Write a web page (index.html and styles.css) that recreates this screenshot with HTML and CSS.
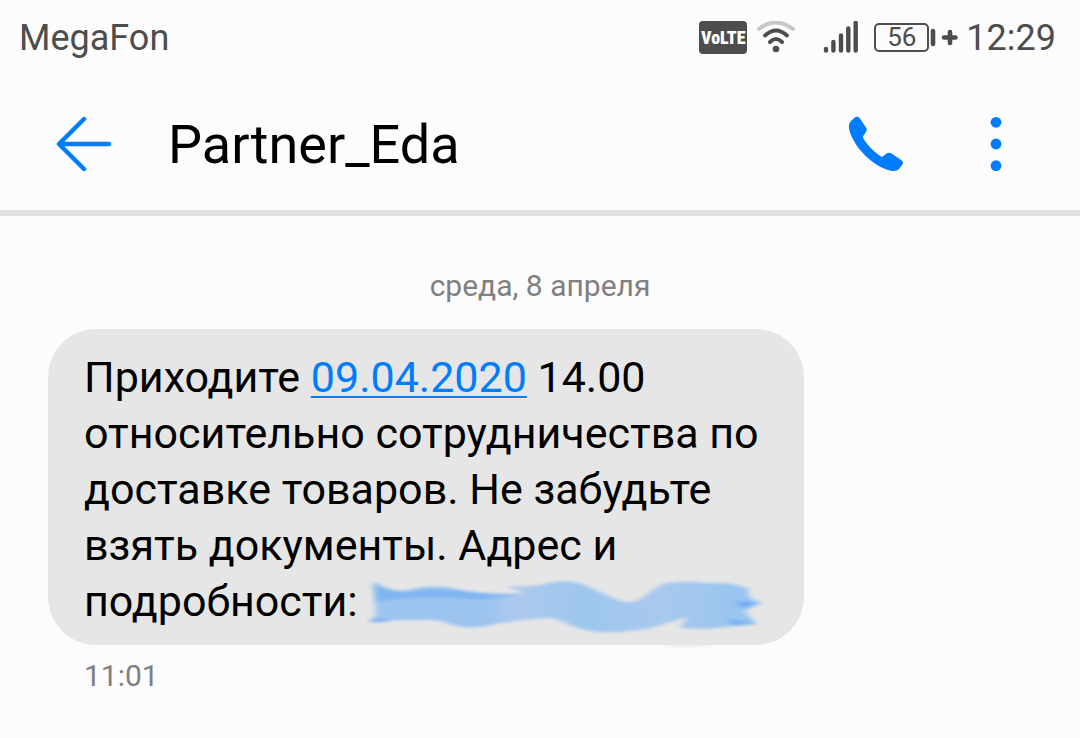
FILE: index.html
```html
<!DOCTYPE html>
<html lang="ru">
  <head>
    <meta charset="utf-8">
    <title>Partner_Eda</title>
    <link rel="stylesheet" href="styles.css">
  </head>
  <body>
    <div class="status-bar">
      <span class="carrier">MegaFon</span>
      <div class="status-icons">
        <span class="volte">VoLTE</span>
        <svg class="wifi" width="38" height="34" viewBox="0 0 38 34" fill="none" stroke="#4d4d4d" stroke-width="4" stroke-linecap="round">
          <path d="M2 8Q19-5 36 8" stroke="#c8c8c8" />
          <path d="M8 14.500Q19 4.500 30 14.500" />
          <path d="M13 21Q19 15 25 21" />
          <circle cx="19" cy="28" r="3.3" fill="#4d4d4d" stroke="none" />
        </svg>
        <svg class="signal" width="36" height="34" viewBox="0 0 36 34" stroke="#4d4d4d" stroke-width="4.4" stroke-linecap="round">
          <path d="M3 28V29.500M10.400 21V29.500M18 14.500V29.500M25.300 7.500V29.500M32.700 1.800V29.500" />
        </svg>
        <div class="battery">
          <span class="battery-level">56</span>
          <svg width="30" height="20" viewBox="0 0 30 20" stroke="#4d4d4d" stroke-width="4.600" stroke-linecap="round">
            <path d="M4 3V16" />
            <path d="M15 9.500H26.500M21 4V15" />
          </svg>
        </div>
        <span class="clock">12:29</span>
      </div>
    </div>

    <header class="header">
      <button class="icon-button" aria-label="Назад">
        <svg width="56" height="56" viewBox="0 0 56 56" fill="none" stroke="#007dff" stroke-width="4.4" stroke-linecap="round" stroke-linejoin="round">
          <path d="M28 3L3 28L28 53M3 28H53" />
        </svg>
      </button>
      <h1 class="title">Partner_Eda</h1>
      <button class="icon-button" aria-label="Позвонить">
        <svg width="56" height="56" viewBox="0 0 56 56" fill="#007dff">
          <path d="M3 5L6.500 1.700Q9.500 -.2 11.500 2L18 11.500Q19.500 13.500 18 15.800L14.700 21C18 28 26.500 36.500 34 41L38.500 37.500Q41 36 43.500 37.500L53.500 44.200Q56 46 54.500 48.300L51 53Q49 55.500 44 55C28 52 10 36 3 19C.5 13 0 8 3 5Z" />
        </svg>
      </button>
      <button class="icon-button" aria-label="Меню">
        <svg width="56" height="56" viewBox="0 0 56 56" fill="#007dff">
          <circle cx="28" cy="6.300" r="5.400" />
          <circle cx="28" cy="28" r="5.400" />
          <circle cx="28" cy="49.700" r="5.400" />
        </svg>
      </button>
    </header>

    <main class="chat">
      <p class="date">среда, 8 апреля</p>
      <div class="message">
        Приходите <a class="message-link" href="#">09.04.2020</a> 14.00 относительно сотрудничества по доставке товаров. Не забудьте взять документы. Адрес и <span class="last-line">подробности:<svg class="smear" width="396" height="56" viewBox="0 0 396 56">
          <defs>
            <linearGradient id="paint" x1="0" y1="0" x2="1" y2="0">
              <stop offset="0" stop-color="#9cc4ee" />
              <stop offset=".3" stop-color="#9cc4ef" />
              <stop offset=".38" stop-color="#adc9ec" />
              <stop offset=".55" stop-color="#9dc7ef" />
              <stop offset=".75" stop-color="#a9c9ee" />
              <stop offset="1" stop-color="#94c3f0" />
            </linearGradient>
            <filter id="soft" x="-10%" y="-30%" width="120%" height="160%">
              <feGaussianBlur stdDeviation="3 1.400" />
            </filter>
          </defs>
          <g filter="url(#soft)">
            <path fill="#e6e6e6" d="M294 71Q318 77 350 71Z" />
            <path fill="url(#paint)" d="M7 10Q12 9 16 13Q26 19 38 18C55 13 75 12 90 16C112 22 135 21 158 20L141 13Q160 14 174 12C198 5 211 8 227 16C247 25 255 30 266 29C283 25 287 12 301 10Q322 7 341 10Q362 9 382 15L383 24L395 30L378 38L391 51Q366 53 341 56L314 55L321 44C300 50 287 57 260 58C235 62 213 57 197 49L187 45C168 45 154 48 134 50C112 56 94 56 78 49C65 45 50 48 34 47L4 49L10 42Z" />
            <path fill="#70adf3" opacity=".65" d="M8 11L18 15Q36 20 51 18C77 13 100 20 152 22Q112 29 88 25Q50 22 10 29Z" />
            <path fill="#5ca3f5" d="M4 46H21V49H4ZM368 28L393 30L376 35ZM362 46L390 51L367 52Z" opacity=".7" />
          </g>
        </svg></span>
      </div>
      <time class="time">11:01</time>
    </main>
  </body>
</html>
```
FILE: styles.css
```css
body {
  margin: 0;
  font-family: Roboto, "Noto Sans", sans-serif;
  background-color: #fcfcfc;
  color: #000;
}

.status-bar {
  display: flex;
  align-items: center;
  justify-content: space-between;
  height: 75px;
  padding: 0 24px 0 19px;
  font-size: 36px;
  color: #4d4d4d;
}

.status-icons {
  display: flex;
  align-items: center;
}

.volte {
  width: 48px;
  margin-right: 10px;
  border-radius: 4px;
  background-color: #4d4d4d;
  color: #fff;
  font-family: "Roboto Condensed", Roboto, sans-serif;
  font-size: 18px;
  font-weight: 900;
  line-height: 33px;
  text-align: center;
}

.signal {
  margin-left: 28px;
  margin-right: 15px;
}

.battery {
  display: flex;
  align-items: center;
  margin-right: 7px;
}

.battery-level {
  box-sizing: border-box;
  width: 55px;
  border: 2px solid #4d4d4d;
  border-radius: 5px;
  font-size: 26px;
  line-height: 25px;
  text-align: center;
}

.header {
  display: flex;
  align-items: center;
  gap: 56px;
  height: 135px;
  padding: 0 56px;
  border-bottom: 6px solid #e1e1e1;
}

.title {
  flex: 1;
  margin: 0;
  padding-top: 4px;
  font-size: 54px;
  font-weight: 400;
}

.icon-button {
  padding: 2px 0 0;
  border: none;
  background: none;
}

.icon-button svg {
  display: block;
}

.icon-button:last-child {
  margin: 0 0 0 8px;
}

.chat {
  padding: 52px 48px 40px;
}

.date {
  margin: 0 0 25px;
  font-size: 30px;
  line-height: 36px;
  text-align: center;
  color: #808080;
}

.message {
  box-sizing: border-box;
  width: 70vw;
  padding: 20px 36px 16px;
  border-radius: 48px;
  background-color: #e6e6e6;
  font-size: 43px;
  line-height: 56px;
}

.message-link {
  color: #007dff;
  text-decoration-thickness: 2px;
  text-underline-offset: 4px;
}

.last-line {
  white-space: nowrap;
}

.smear {
  margin-left: 8px;
  vertical-align: top;
  overflow: visible;
}

.time {
  display: block;
  margin-top: 13px;
  padding: 0 36px;
  font-size: 30px;
  line-height: 36px;
  color: #808080;
}
```
